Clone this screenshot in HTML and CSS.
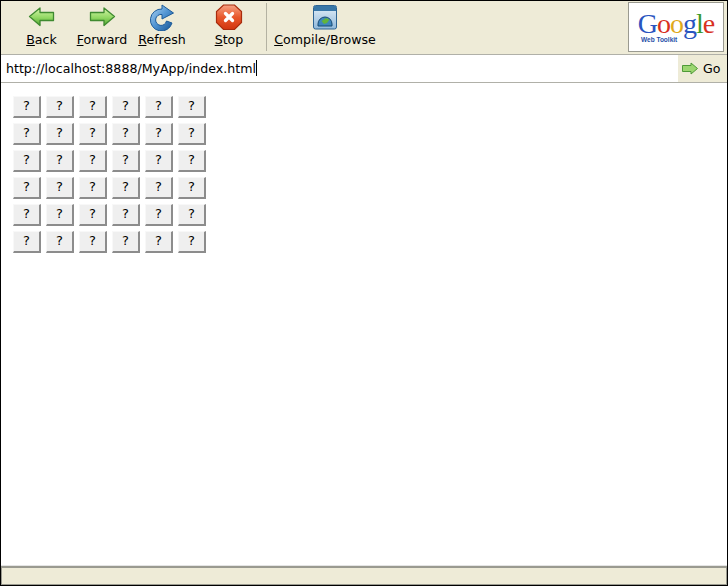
FILE: index.html
```
<!DOCTYPE html>
<html lang="en">
<head>
<meta charset="utf-8">
<title>Hosted Browser</title>
<link rel="stylesheet" href="styles.css">
</head>
<body>
<div class="window">
  <header class="toolbar">
    <div class="tool tool-back">
      <svg class="ico ico-arrow" width="28" height="22" viewBox="0 0 28 22"><defs><linearGradient id="ga" x1="0" y1="0" x2="0" y2="1"><stop offset="0" stop-color="#d4f5a8"/><stop offset=".55" stop-color="#92d864"/><stop offset="1" stop-color="#4fa52e"/></linearGradient></defs><path d="M1.500 10.500 L12 2 V6.500 H25.500 V14.500 H12 V19.500 Z" fill="url(#ga)" stroke="#3f8a30" stroke-width="1.300" stroke-linejoin="round"/></svg>
      <span class="label"><u>B</u>ack</span>
    </div>
    <div class="tool tool-forward">
      <svg class="ico ico-arrow" width="28" height="22" viewBox="0 0 28 22"><path d="M26.500 10.500 L16 2 V6.500 H2.500 V14.500 H16 V19.500 Z" fill="url(#ga)" stroke="#3f8a30" stroke-width="1.300" stroke-linejoin="round"/></svg>
      <span class="label"><u>F</u>orward</span>
    </div>
    <div class="tool tool-refresh">
      <svg class="ico" width="28" height="27" viewBox="0 0 28 27"><defs><linearGradient id="gb" x1="0" y1="0" x2="1" y2="1"><stop offset="0" stop-color="#b4d8f4"/><stop offset=".5" stop-color="#4f93d2"/><stop offset="1" stop-color="#14518f"/></linearGradient></defs><path d="M14 5 A11 11 0 1 0 24 19 L18.500 17 A5.500 5.500 0 1 1 14 10.500 L14 15 L25.500 9 L14 1 Z" fill="url(#gb)" stroke="#1b5a9a" stroke-width="1" stroke-linejoin="round"/></svg>
      <span class="label"><u>R</u>efresh</span>
    </div>
    <div class="tool tool-stop">
      <svg class="ico" width="28" height="27" viewBox="0 0 28 27"><defs><linearGradient id="gr" x1="0" y1="0" x2="0" y2="1"><stop offset="0" stop-color="#f6a284"/><stop offset=".5" stop-color="#e8572c"/><stop offset="1" stop-color="#d2360f"/></linearGradient></defs><path d="M8.500 1 H19.500 L26.500 7.500 V18.500 L19.500 25.500 H8.500 L1.500 18.500 V7.500 Z" fill="url(#gr)" stroke="#a82c0e" stroke-width="1.200"/><path d="M10.500 9.500 L17.500 16.500 M17.500 9.500 L10.500 16.500" stroke="#fff" stroke-width="3.300" stroke-linecap="round"/></svg>
      <span class="label"><u>S</u>top</span>
    </div>
    <div class="sep"></div>
    <div class="tool tool-compile">
      <svg class="ico" width="26" height="26" viewBox="0 0 26 26"><defs><linearGradient id="gw" x1="0" y1="0" x2="0" y2="1"><stop offset="0" stop-color="#e4f0f8"/><stop offset="1" stop-color="#8fb8da"/></linearGradient></defs><rect x="1.500" y="1.500" width="23" height="23.500" rx="2" fill="url(#gw)" stroke="#2d6493"/><rect x="2" y="2" width="22" height="5" fill="#3877a8"/><path d="M6 22 V20 A7 7 0 0 1 20 20 V22 Z" fill="#3f86bd" stroke="#174a73" stroke-width="1"/><path d="M9.500 17 L14 14 L17.500 15.500 L15 19 L12 20 Z" fill="#62b53c"/></svg>
      <span class="label"><u>C</u>ompile/Browse</span>
    </div>
    <div class="logo">
      <div class="logo-word"><span class="b">G</span><span class="r">o</span><span class="y">o</span><span class="b">g</span><span class="g">l</span><span class="r">e</span></div>
      <div class="logo-sub">Web Toolkit</div>
    </div>
  </header>
  <div class="address">
    <div class="url">http://localhost:8888/MyApp/index.html<span class="caret"></span></div>
    <div class="go">
      <svg width="16" height="13" viewBox="0 0 16 13"><path d="M15.500 6.500 L9 1 V3.500 H.5 V9.500 H9 V12 Z" fill="#9cd670" stroke="#4f9a38"/></svg>
      <span>Go</span>
    </div>
  </div>
  <main class="content">
    <div class="board">
      <button class="cell">?</button><button class="cell">?</button><button class="cell">?</button><button class="cell">?</button><button class="cell">?</button><button class="cell">?</button>
      <button class="cell">?</button><button class="cell">?</button><button class="cell">?</button><button class="cell">?</button><button class="cell">?</button><button class="cell">?</button>
      <button class="cell">?</button><button class="cell">?</button><button class="cell">?</button><button class="cell">?</button><button class="cell">?</button><button class="cell">?</button>
      <button class="cell">?</button><button class="cell">?</button><button class="cell">?</button><button class="cell">?</button><button class="cell">?</button><button class="cell">?</button>
      <button class="cell">?</button><button class="cell">?</button><button class="cell">?</button><button class="cell">?</button><button class="cell">?</button><button class="cell">?</button>
      <button class="cell">?</button><button class="cell">?</button><button class="cell">?</button><button class="cell">?</button><button class="cell">?</button><button class="cell">?</button>
    </div>
  </main>
  <footer class="status"></footer>
</div>
</body>
</html>
```
FILE: styles.css
```
* { box-sizing: border-box; }
html, body { margin: 0; padding: 0; height: 100%; overflow: hidden; }
body { font-family: "DejaVu Sans", sans-serif; font-size: 12.6px; color: #000; }
.window {
  height: 586px;
  display: flex;
  flex-direction: column;
  border: 1px solid #000;
  background: #fff;
}
.toolbar {
  height: 53px;
  flex: none;
  display: flex;
  align-items: stretch;
  background: #eeebd7;
}
.tool {
  display: flex;
  flex-direction: column;
  align-items: center;
  justify-content: flex-end;
  padding-bottom: 7px;
  position: relative;
  flex: none;
  white-space: nowrap;
}
.ico { position: absolute; top: 3px; left: 50%; transform: translateX(-50%); }
.ico-arrow { top: 5px; }
.tool-back { width: 61px; margin-left: 10px; }
.tool-forward { width: 60px; }
.tool-refresh { width: 60px; }
.tool-stop { width: 60px; margin-left: 7px; }
.tool-compile { width: 102px; margin-left: 7px; }
.sep { width: 1px; margin: 2px 0 3px 7px; background: #b4b2a2; flex: none; }
.label { line-height: 15px; }
.logo {
  margin: 1px 3px 2px auto;
  width: 96px;
  background: #fff;
  border: 1px solid #9a9a90;
  display: flex;
  flex-direction: column;
  align-items: center;
}
.logo-word {
  font-family: "Liberation Serif", serif;
  font-size: 28px;
  line-height: 24px;
  margin-top: 9px;
  letter-spacing: -1px;
}
.logo-sub {
  align-self: flex-start;
  margin: 0 0 0 12px;
  font-family: "Liberation Sans", sans-serif;
  font-size: 6.5px;
  line-height: 8px;
  font-weight: bold;
  color: #1f4fa8;
}
.b { color: #2a55c0; }
.r { color: #d8311f; }
.y { color: #e0a91b; }
.g { color: #3a9a2e; }
.address {
  height: 29px;
  flex: none;
  display: flex;
  border-top: 1px solid #b0b0a8;
  border-bottom: 1px solid #b0b0a8;
  background: #fff;
}
.url {
  flex: 1;
  padding: 5px 0 0 5px;
  line-height: 16px;
  white-space: nowrap;
}
.caret {
  display: inline-block;
  width: 1px;
  height: 16px;
  background: #000;
  vertical-align: -3px;
}
.go {
  width: 49px;
  flex: none;
  display: flex;
  align-items: center;
  gap: 5px;
  padding-left: 4px;
  background: #eeebd7;
}
.content { flex: 1; padding: 13px 0 0 12px; border-bottom: 1px solid #e4e4e4; }
.board {
  display: grid;
  grid-template-columns: repeat(6, 28px);
  grid-auto-rows: 22px;
  gap: 5px;
}
.cell {
  margin: 0;
  padding: 0 0 2px;
  font-family: "DejaVu Sans", sans-serif;
  font-size: 13px;
  color: #000;
  background: #efefef;
  border-style: solid;
  border-width: 1px 2px 2px 1px;
  border-color: #f8f8f8 #8c8c8c #8c8c8c #f8f8f8;
}
.status {
  height: 19px;
  flex: none;
  background: #eeebd7;
  border: 1px solid #9a9a90;
  border-top-width: 2px;
}
```
